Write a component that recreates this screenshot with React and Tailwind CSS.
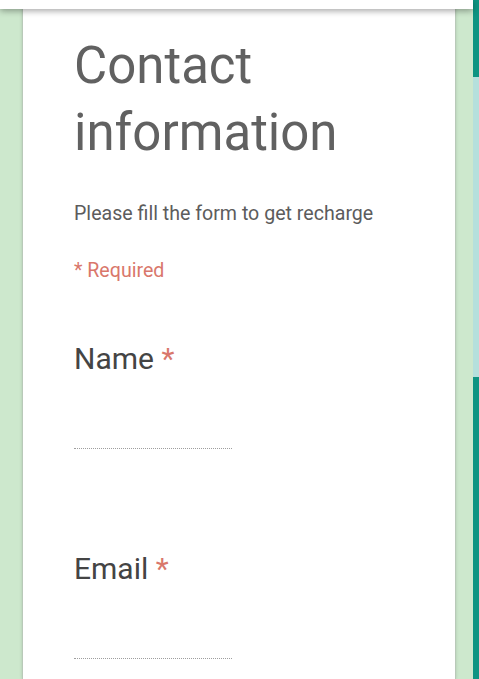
export default function App() {
  const font = { fontFamily: "Roboto, 'Noto Sans', sans-serif" };
  return (
    <div className="relative w-full h-[679px] overflow-hidden bg-[#cde8cd] flex" style={font}>
      <div className="absolute top-0 left-0 right-[6px] h-[9px] bg-white shadow-[0_2px_6px_rgba(0,0,0,0.35)] z-10" />
      <div className="w-[22px] shrink-0" />
      <div className="w-[434px] shrink-0 bg-white border-x border-[#b9c9b9] shadow-[0_0_3px_rgba(0,0,0,0.15)] pl-[51px] pt-[32px]">
        <h1 className="text-[51px] leading-[67px] text-[#616161] font-normal">Contact<br />information</h1>
        <p className="mt-[36px] text-[19.6px] leading-[24px] text-[#5c5c5c]">Please fill the form to get recharge</p>
        <p className="mt-[33px] text-[19.6px] leading-[24px] text-[#d9776b]">* Required</p>
        <div className="mt-[58px]">
          <div className="text-[30px] leading-[36px] text-[#444]">Name <span className="text-[#d9776b]">*</span></div>
          <div className="mt-[71px] w-[158px] border-b border-dotted border-[#9e9e9e]" />
        </div>
        <div className="mt-[102px]">
          <div className="text-[30px] leading-[36px] text-[#444]">Email <span className="text-[#d9776b]">*</span></div>
          <div className="mt-[71px] w-[158px] border-b border-dotted border-[#9e9e9e]" />
        </div>
      </div>
      <div className="flex-1" />
      <div className="w-[6px] shrink-0 flex flex-col">
        <div className="h-[77px] bg-[#0e9482]" />
        <div className="h-[300px] bg-[#b5e0dc]" />
        <div className="flex-1 bg-[#0e9482]" />
      </div>
    </div>
  );
}
